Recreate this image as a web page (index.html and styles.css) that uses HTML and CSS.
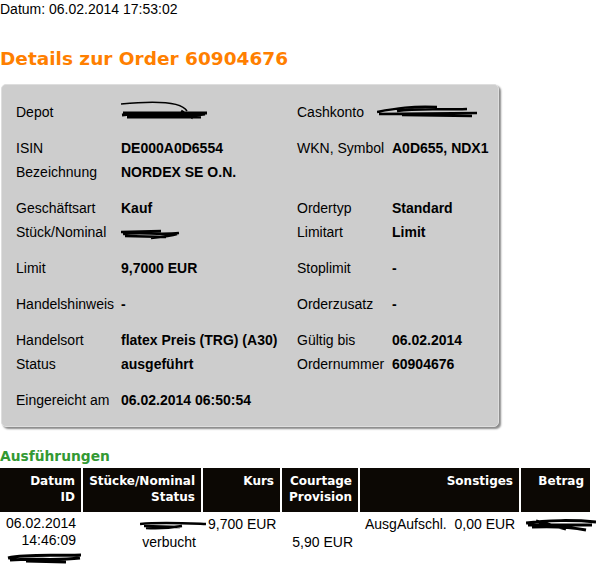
FILE: index.html
```html
<!DOCTYPE html>
<html lang="de">
<head>
    <meta charset="UTF-8">
    <title>Orderdetails</title>
    <link rel="stylesheet" href="styles.css">
</head>
<body>

    <div class="stempel">Datum: 06.02.2014 17:53:02</div>

    <h1>Details zur Order 60904676</h1>

    <!-- Orderdaten -->
    <div class="box">
        <div class="block">
            <span>Depot</span>
            <span class="wert">
                <svg class="schwarz" width="90" height="22" viewBox="0 0 90 22">
                    <path d="M0 3 C30 0 60 0 66 10" fill="none" stroke="#000" stroke-width="1.5"/>
                    <path d="M2 12 L86 12 M1 14 C30 11 60 16 84 13 M6 16 L80 16 M60 10 L72 17" fill="none" stroke="#000" stroke-width="3"/>
                </svg>
            </span>
            <span>Cashkonto</span>
            <span class="wert rechts">
                <svg class="schwarz" width="100" height="20" viewBox="0 0 100 20">
                    <path d="M0 10 C20 6 35 4 60 5 M2 12 L100 11 M20 9 C40 6 60 8 90 7 M25 13 L95 14" fill="none" stroke="#000" stroke-width="2.5"/>
                </svg>
            </span>
        </div>

        <div class="block">
            <span>ISIN</span>
            <span class="wert">DE000A0D6554</span>
            <span>WKN, Symbol</span>
            <span class="wert">A0D655, NDX1</span>
            <span>Bezeichnung</span>
            <span class="wert">NORDEX SE O.N.</span>
            <span></span>
            <span></span>
        </div>

        <div class="block">
            <span>Geschäftsart</span>
            <span class="wert">Kauf</span>
            <span>Ordertyp</span>
            <span class="wert">Standard</span>
            <span>Stück/Nominal</span>
            <span class="wert">
                <svg class="schwarz" width="60" height="16" viewBox="0 0 60 16">
                    <path d="M0 7 L40 6 M2 9 C20 7 40 10 58 8 M4 11 L45 12 M30 13 C40 12 50 11 56 9" fill="none" stroke="#000" stroke-width="2.5"/>
                </svg>
            </span>
            <span>Limitart</span>
            <span class="wert">Limit</span>
        </div>

        <div class="block">
            <span>Limit</span>
            <span class="wert">9,7000 EUR</span>
            <span>Stoplimit</span>
            <span class="wert">-</span>
        </div>

        <div class="block">
            <span>Handelshinweis</span>
            <span class="wert">-</span>
            <span>Orderzusatz</span>
            <span class="wert">-</span>
        </div>

        <div class="block">
            <span>Handelsort</span>
            <span class="wert">flatex Preis (TRG) (A30)</span>
            <span>Gültig bis</span>
            <span class="wert">06.02.2014</span>
            <span>Status</span>
            <span class="wert">ausgeführt</span>
            <span>Ordernummer</span>
            <span class="wert">60904676</span>
        </div>

        <div class="block">
            <span>Eingereicht am</span>
            <span class="wert">06.02.2014 06:50:54</span>
        </div>
    </div>

    <h2>Ausführungen</h2>

    <table class="ausf">
        <thead>
            <tr>
                <th class="c1">Datum<br>ID</th>
                <th class="c2">Stücke/Nominal<br>Status</th>
                <th class="c3">Kurs</th>
                <th class="c4">Courtage<br>Provision</th>
                <th class="c5">Sonstiges</th>
                <th class="c6">Betrag</th>
            </tr>
        </thead>
        <tbody>
            <tr>
                <td class="erste">06.02.2014<br>14:46:09<br>
                    <svg class="schwarz" width="76" height="12" viewBox="0 0 76 12">
                        <path d="M2 6 C20 2 40 4 75 3 M4 8 C30 6 50 9 74 6 M20 9 L60 10" fill="none" stroke="#000" stroke-width="3"/>
                    </svg>
                </td>
                <td>
                    <svg class="schwarz ueber" width="66" height="14" viewBox="0 0 66 14">
                        <path d="M0 6 C20 4 40 5 66 6 M4 8 L40 9 M6 10 C20 11 30 10 42 8" fill="none" stroke="#000" stroke-width="2.5"/>
                    </svg><br>verbucht</td>
                <td>9,700 EUR</td>
                <td><br>5,90 EUR</td>
                <td>AusgAufschl.&nbsp;&nbsp;0,00 EUR</td>
                <td class="betrag">
                    <svg class="schwarz" width="70" height="16" viewBox="0 0 70 16">
                        <path d="M0 6 C20 3 50 3 70 5 M2 8 L66 8 M6 10 C30 9 50 11 60 13 M10 4 L40 12" fill="none" stroke="#000" stroke-width="3"/>
                    </svg>
                </td>
            </tr>
        </tbody>
    </table>

</body>
</html>
```

FILE: styles.css
```css
body {
    margin: 0;
    font-family: "Liberation Sans", Arial, sans-serif;
    font-size: 14px;
    color: #000000;
    background-color: #ffffff;
}

.stempel {
    line-height: 18px;
}

h1 {
    margin: 30px 0 14px 0;
    font-family: "DejaVu Sans", Verdana, sans-serif;
    font-size: 18.5px;
    line-height: 22px;
    color: #ff7f00;
}

h2 {
    margin: 21px 0 4px 0;
    font-family: "DejaVu Sans", Verdana, sans-serif;
    font-size: 13.8px;
    line-height: 16px;
    color: #339933;
}

.box {
    width: 468px;
    margin-left: 1px;
    padding: 15px 14px 2px 14px;
    background-color: #cdcdcd;
    border: 1px solid #dedede;
    border-radius: 5px;
    box-shadow: 2px 2px 2px #8a8a8a;
}

.block {
    display: grid;
    grid-template-columns: 105px 176px 95px auto;
    grid-auto-rows: 24px;
    align-items: center;
    margin-bottom: 12px;
    white-space: nowrap;
}

.wert {
    font-weight: bold;
}

.schwarz {
    display: inline-block;
    vertical-align: middle;
}

.rechts {
    margin-left: -15px;
}

.ausf {
    border-collapse: collapse;
    table-layout: fixed;
    width: 590px;
}

.ausf th {
    background-color: #0c0804;
    color: #ffffff;
    font-family: "DejaVu Sans", Verdana, sans-serif;
    font-size: 12px;
    line-height: 16px;
    height: 44px;
    padding: 5px 6px 0 6px;
    text-align: right;
    vertical-align: top;
    border-left: 2px solid #ffffff;
    box-sizing: border-box;
    white-space: nowrap;
}

.ausf th:first-child {
    border-left: none;
}

.c1 { width: 82px; }
.c2 { width: 120px; }
.c3 { width: 79px; }
.c4 { width: 78px; }
.c5 { width: 161px; }

.ausf td {
    padding: 3px 6px 0 6px;
    line-height: 18px;
    text-align: right;
    vertical-align: top;
    white-space: nowrap;
}

.ausf td.erste {
    line-height: 17px;
}

.ueber {
    margin-right: -10px;
}

.betrag {
    padding-left: 0;
}
```
